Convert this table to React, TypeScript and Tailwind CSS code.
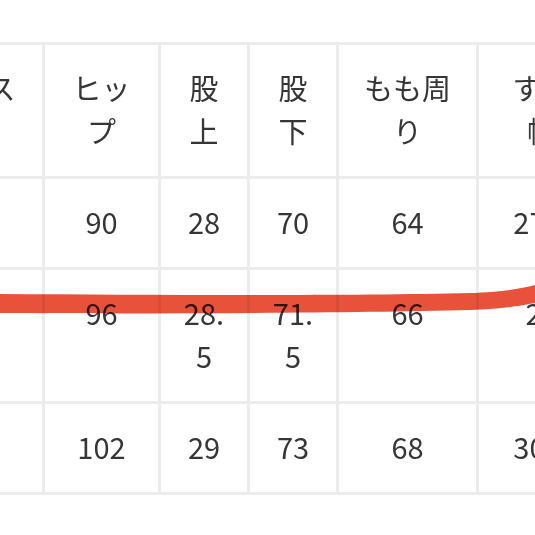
import React from "react";

const header = ["ウエスト", "ヒップ", "股上", "股下", "もも周り", "すそ幅"];
const rows = [
  ["64", "90", "28", "70", "64", "27.5"],
  ["70", "96", "28.5", "71.5", "66", "29"],
  ["76", "102", "29", "73", "68", "30.5"],
];

function Cell({ children }: { children: React.ReactNode }) {
  return (
    <div className="bg-white px-[22px] pt-[21px] pb-[24px] text-center leading-[43px] break-all">
      {children}
    </div>
  );
}

export default function App() {
  return (
    <div
      className="relative w-[535px] h-[535px] overflow-hidden bg-white text-[29px] text-[#363636]"
      style={{ fontFamily: '"Noto Sans CJK JP", "Noto Sans", sans-serif' }}
    >
      <div className="pt-[42px]">
        <div className="ml-[-101px] w-max grid grid-cols-[140px_113px_86px_86px_137px_125px] gap-[3px] p-[3px] bg-[#ececec]">
          {header.map((h, i) => (
            <Cell key={"h" + i}>{h}</Cell>
          ))}
          {rows.map((r, ri) =>
            r.map((v, ci) => <Cell key={ri + "-" + ci}>{v}</Cell>)
          )}
        </div>
      </div>
      <svg
        className="absolute left-0 top-0 pointer-events-none mix-blend-multiply"
        width="535"
        height="535"
        viewBox="0 0 535 535"
      >
        <path
          d="M0 294 C 150 295, 350 296, 470 293 C 500 292, 520 289, 535 285 L 535 303 C 520 306, 500 309, 470 310 C 350 313, 150 314, 0 313 Z"
          fill="#e9523a"
        />
      </svg>
    </div>
  );
}
